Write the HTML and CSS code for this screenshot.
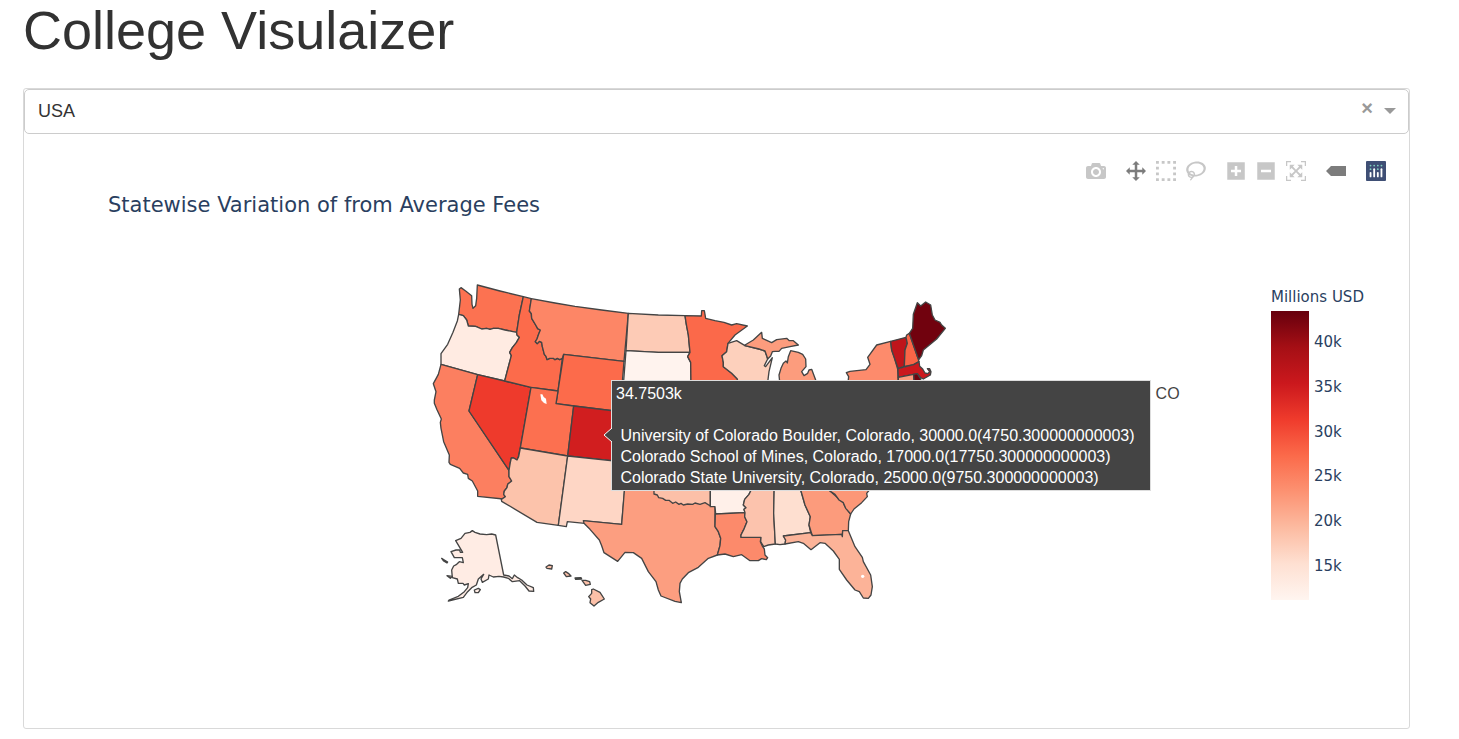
FILE: index.html
```html
<!DOCTYPE html>
<html lang="en">
<head>
<meta charset="utf-8">
<title>College Visulaizer</title>
<link rel="stylesheet" href="styles.css">
</head>
<body>
<main class="page">
  <h1 class="page-title">College Visulaizer</h1>
  <section class="card">
    <div class="dropdown">
      <select class="dropdown-select" aria-label="Country">
        <option>USA</option>
      </select>
      <button class="dropdown-clear" type="button" aria-label="Clear value">×</button>
      <span class="dropdown-arrow"></span>
    </div>
    <div class="modebar">
      <div class="modebar-group">
        <button class="tool" type="button" aria-label="Download plot as a png"><svg viewBox="0 0 1000 1000"><path transform="matrix(1 0 0 -1 0 850)" d="m500 450c-83 0-150-67-150-150 0-83 67-150 150-150 83 0 150 67 150 150 0 83-67 150-150 150z m400 150h-120c-16 0-34 13-39 29l-31 93c-6 15-23 28-40 28h-340c-16 0-34-13-39-28l-31-94c-6-15-23-28-40-28h-120c-55 0-100-45-100-100v-450c0-55 45-100 100-100h800c55 0 100 45 100 100v450c0 55-45 100-100 100z m-400-550c-138 0-250 112-250 250 0 138 112 250 250 250 138 0 250-112 250-250 0-138-112-250-250-250z m365 380c-19 0-35 16-35 35 0 19 16 35 35 35 19 0 35-16 35-35 0-19-16-35-35-35z"/></svg></button>
      </div>
      <div class="modebar-group">
        <button class="tool tool-active" type="button" aria-label="Pan"><svg viewBox="0 0 1000 1000"><path transform="matrix(1 0 0 -1 0 850)" d="m1000 350l-187 188 0-125-250 0 0 250 125 0-188 187-187-187 125 0 0-250-250 0 0 125-188-188 186-187 0 125 252 0 0-250-125 0 187-188 188 188-125 0 0 250 250 0 0-126 187 188z"/></svg></button>
        <button class="tool" type="button" aria-label="Box Select"><svg viewBox="0 0 1000 1000"><path transform="matrix(1 0 0 -1 0 850)" d="m0 850l0-143 143 0 0 143-143 0z m286 0l0-143 143 0 0 143-143 0z m285 0l0-143 143 0 0 143-143 0z m286 0l0-143 143 0 0 143-143 0z m-857-286l0-143 143 0 0 143-143 0z m857 0l0-143 143 0 0 143-143 0z m-857-285l0-143 143 0 0 143-143 0z m857 0l0-143 143 0 0 143-143 0z m-857-286l0-143 143 0 0 143-143 0z m286 0l0-143 143 0 0 143-143 0z m285 0l0-143 143 0 0 143-143 0z m286 0l0-143 143 0 0 143-143 0z"/></svg></button>
        <button class="tool" type="button" aria-label="Lasso Select"><svg viewBox="0 0 1031 1000"><path transform="matrix(1 0 0 -1 0 850)" d="m1018 538c-36 207-290 336-568 286-277-48-473-256-436-463 10-57 36-108 76-151-13-66 11-137 68-183 34-28 75-41 114-42l-55-70 0 0c-2-1-3-2-4-3-10-14-8-34 5-45 14-11 34-8 45 4 1 1 2 3 2 5l0 0 113 140c16 11 31 24 45 40 4 3 6 7 8 11 48-3 100 0 151 9 278 48 473 255 436 462z m-624-379c-80 14-149 48-197 96 42 42 109 47 156 9 33-26 47-66 41-105z m-187-74c-19 16-33 37-39 60 50-32 109-55 174-68-42-25-95-24-135 8z m360 75c-34-7-69-9-102-8 8 62-16 128-68 170-73 59-175 54-244-5-9 20-16 40-20 61-28 159 121 317 333 354s407-60 434-217c28-159-121-318-333-355z"/></svg></button>
      </div>
      <div class="modebar-group">
        <button class="tool" type="button" aria-label="Zoom in"><svg viewBox="0 0 875 1000"><path transform="matrix(1 0 0 -1 0 850)" d="m1 787l0-875 875 0 0 875-875 0z m687-500l-187 0 0-187-125 0 0 187-188 0 0 125 188 0 0 187 125 0 0-187 187 0 0-125z"/></svg></button>
        <button class="tool" type="button" aria-label="Zoom out"><svg viewBox="0 0 875 1000"><path transform="matrix(1 0 0 -1 0 850)" d="m0 788l0-876 875 0 0 876-875 0z m688-500l-500 0 0 125 500 0 0-125z"/></svg></button>
        <button class="tool" type="button" aria-label="Reset"><svg viewBox="0 0 1000 1000"><path transform="matrix(1 0 0 -1 0 850)" d="m250 850l-187 0-63 0 0-62 0-188 63 0 0 188 187 0 0 62z m688 0l-188 0 0-62 188 0 0-188 62 0 0 188 0 62-62 0z m-875-938l0 188-63 0 0-188 0-62 63 0 187 0 0 62-187 0z m875 188l0-188-188 0 0-62 188 0 62 0 0 62 0 188-62 0z m-125 188l-1 0-93-94-156 156 156 156 92-93 2 0 0 250-250 0 0-2 93-92-156-156-156 156 94 92 0 2-250 0 0-250 0 0 93 93 157-156-157-156-93 94 0 0 0-250 250 0 0 0-94 93 156 157 156-157-93-93 0 0 250 0 0 250z"/></svg></button>
      </div>
      <div class="modebar-group">
        <button class="tool tool-active" type="button" aria-label="Toggle show closest data on hover"><svg viewBox="0 0 1500 1000"><path transform="matrix(1 0 0 -1 0 850)" d="m375 725l0 0-375-375 375-374 0-1 1125 0 0 750-1125 0z"/></svg></button>
      </div>
      <div class="modebar-group">
        <a class="tool" href="#" aria-label="Produced with Plotly"><svg viewBox="0 0 132 132"><rect width="132" height="132" rx="6" fill="#3f4f75"/><g fill="#80cfbe"><circle cx="30" cy="30" r="6"/><circle cx="54" cy="30" r="6"/><circle cx="78" cy="30" r="6"/><circle cx="102" cy="30" r="6"/><circle cx="30" cy="54" r="6"/><circle cx="78" cy="54" r="6"/></g><g fill="#fff"><rect x="24" y="72" width="12" height="36" rx="6"/><rect x="48" y="48" width="12" height="60" rx="6"/><rect x="72" y="72" width="12" height="36" rx="6"/><rect x="96" y="48" width="12" height="60" rx="6"/></g></svg></a>
      </div>
    </div>
    <h2 class="chart-title">Statewise Variation of from Average Fees</h2>
    <div class="plot">
      <div class="map-area">
        <div class="map">
          <svg class="map-svg" viewBox="-21 15 1629 996" role="img" aria-label="Average fees by state">
            <g class="states">
              <polygon fill="#fc7251" points="103,42 108,38 122,48 140,62 141,88 144,100 152,92 155,70 157,30 225,48 295,65 283,120 275,172 240,165 220,160 205,160 195,163 185,160 170,162 152,154 130,153 125,135 115,122 101,118 106,75"/>
              <polygon fill="#ffebe2" points="101,118 115,122 125,135 130,153 152,154 170,162 185,160 195,163 205,160 220,160 240,165 275,172 276,180 283,187 274,203 262,218 254,232 259,242 239,318 158,299 48,268 48,236 68,208 84,172 97,138"/>
              <polygon fill="#fc7f60" points="48,268 158,299 132,408 252,586 252,605 260,618 248,628 246,638 238,648 236,658 241,665 235,672 158,664 158,648 142,618 130,610 128,598 115,594 104,580 76,568 72,562 73,540 56,500 48,460 46,442 49,432 36,404 28,385 28,375 33,350 25,326 40,298"/>
              <polygon fill="#ee3a2c" points="158,299 239,318 318,337 286,518 280,545 276,555 266,549 259,549 256,562 252,586 132,408"/>
              <polygon fill="#fc6b4b" points="295,65 319,71 316,90 313,108 319,116 320,130 332,150 338,161 346,165 340,180 336,192 331,200 337,206 343,199 350,202 352,215 358,238 363,244 366,254 374,250 385,250 390,254 397,250 404,254 412,250 399,348 318,337 239,318 259,242 254,232 262,218 274,203 283,187 276,180 275,172 283,120"/>
              <polygon fill="#fd8666" points="319,71 390,84 450,94 530,105 610,115 597,259 416,238 412,250 404,254 397,250 390,254 385,250 374,250 366,254 363,244 358,238 352,215 350,202 343,199 337,206 331,200 336,192 340,180 346,165 338,161 332,150 320,130 319,116 313,108 316,90"/>
              <polygon fill="#fc6b4b" points="416,238 597,259 585,410 393,386"/>
              <polygon fill="#fc7050" points="318,337 399,348 393,386 446,393 428,543 286,519"/>
              <polygon fill="#d11e1f" points="446,393 620,414 608,562 428,543"/>
              <polygon fill="#fcc3ab" points="286,519 428,543 400,751 336,742 230,679 229,673 241,665 236,658 238,648 246,638 248,628 260,618 252,605 252,586 256,562 259,549 266,549 276,555 281,545"/>
              <polygon fill="#fed6c5" points="428,543 606,562 590,748 477,738 479,745 427,740 424,755 400,751"/>
              <polygon fill="#fc9e80" points="606,562 598,648 590,748 475,737 477,745 495,763 523,795 530,812 537,833 578,859 600,832 625,833 650,850 670,890 693,920 700,945 708,963 750,979 769,983 763,950 765,925 772,912 790,893 820,877 850,850 877,840 885,812 887,790 880,770 870,755 870,695 687,580"/>
              <polygon fill="#fcc0a8" points="687,600 687,657 697,660 701,668 713,670 722,676 732,676 743,685 752,681 762,688 768,685 775,690 788,687 803,688 810,684 825,688 840,683 856,693 856,600"/>
              <polygon fill="#fff0e9" points="856,620 856,695 870,695 872,717 960,713 957,703 963,698 955,690 959,673 972,658 977,648 980,620"/>
              <polygon fill="#fc8a6b" points="871,717 960,713 959,725 966,740 958,760 948,780 948,787 1008,787 1006,800 1013,815 1018,822 1020,840 1028,848 1024,854 1010,851 1000,857 975,857 950,839 925,845 900,837 877,840 885,812 887,790 880,770 870,755"/>
              <polygon fill="#fcc3ad" points="980,620 977,648 972,658 959,673 955,690 963,698 957,703 960,713 959,725 966,740 958,760 948,780 948,787 1008,787 1007,800 1016,815 1030,810 1051,807 1046,715 1048,620"/>
              <polygon fill="#fedfd0" points="1048,620 1046,715 1051,807 1065,809 1080,807 1082,795 1075,783 1157,773 1152,750 1156,725 1140,690 1128,648 1120,620"/>
              <polygon fill="#fc9b7c" points="1120,620 1128,648 1140,690 1156,725 1152,750 1162,782 1250,778 1252,785 1253,767 1270,767 1271,740 1277,717 1260,695 1255,683 1215,648 1190,620"/>
              <polygon fill="#fc9777" points="1190,620 1215,648 1230,658 1242,675 1255,683 1262,700 1277,717 1287,702 1310,683 1327,665 1325,655 1333,645 1340,620"/>
              <polygon fill="#fcb398" points="1075,783 1157,773 1162,782 1250,778 1252,785 1253,767 1270,767 1290,815 1312,847 1315,860 1337,900 1342,935 1338,960 1330,970 1315,969 1303,950 1290,945 1265,915 1243,883 1243,853 1225,828 1200,805 1185,803 1158,824 1135,805 1120,800 1080,807 1082,795"/>
              <polygon fill="#fdcbb6" points="610,115 700,120 780,122 784,148 790,180 795,232 700,232 603,227"/>
              <polygon fill="#fff3ee" points="603,227 700,232 795,232 788,245 797,262 798,330 595,330"/>
              <polygon fill="#fb694a" points="780,122 829,123 830,107 838,107 842,130 870,137 897,142 920,150 935,146 967,153 930,180 909,205 905,230 891,242 895,262 895,275 920,295 937,312 940,330 798,330 797,262 788,245 795,232 790,180 784,148"/>
              <polygon fill="#fdd0bc" points="909,205 935,197 960,212 1002,222 1020,228 1025,242 1028,252 1018,272 1022,275 1042,248 1032,290 1027,330 940,330 937,312 920,295 895,275 895,262 891,242 905,230"/>
              <polygon fill="#fc9c7d" points="960,210 985,195 1010,172 1012,190 1040,203 1055,194 1085,190 1093,197 1105,197 1120,210 1095,215 1070,220 1062,229 1050,229 1042,230 1037,243 1028,252 1025,242 1020,228 1002,222 960,212"/>
              <polygon fill="#fc9c7d" points="1097,227 1120,232 1133,238 1142,252 1143,275 1130,290 1137,302 1148,295 1152,285 1160,283 1172,315 1172,330 1065,330 1062,300 1068,280 1075,265 1083,258 1087,264 1090,245"/>
              <polygon fill="#fd8b6c" points="1264,293 1275,289 1323,284 1335,268 1328,247 1355,210 1397,199 1400,225 1407,245 1418,282 1420,330 1268,330 1271,305"/>
              <polygon fill="#bf151b" points="1397,199 1443,187 1447,205 1440,225 1438,274 1419,280 1407,245 1400,225"/>
              <polygon fill="#fa6547" points="1445,180 1453,175 1466,212 1478,247 1482,260 1466,269 1438,274 1440,225 1447,205 1443,187"/>
              <polygon fill="#71020e" points="1453,175 1463,160 1465,118 1477,83 1487,93 1502,81 1517,90 1522,120 1530,135 1545,142 1550,150 1561,160 1535,192 1495,225 1490,242 1482,253 1478,247 1466,212"/>
              <polygon fill="#cb181d" points="1419,281 1466,269 1482,260 1484,274 1493,282 1500,294 1508,296 1514,290 1507,281 1514,281 1518,290 1516,300 1495,312 1487,308 1477,296 1420,307"/>
              <polygon fill="#fd9a7b" points="1420,307 1466,298 1468,330 1420,330"/>
              <polygon fill="#71020e" points="1466,298 1477,296 1487,312 1487,330 1468,330"/>
              <polygon fill="#ffece4" points="142,767 150,772 165,777 185,779 200,777 212,780 236,900 252,903 262,911 268,900 278,908 290,915 306,930 325,938 326,949 312,948 300,933 284,917 262,920 250,910 236,906 222,904 205,906 192,900 190,912 172,922 168,912 176,898 160,912 154,930 140,938 128,950 115,967 70,978 72,975 100,964 118,950 128,938 130,926 118,930 114,925 100,925 97,912 82,908 80,885 86,873 95,868 103,860 115,863 112,848 88,848 78,830 93,825 104,825 106,832 113,832 92,797 108,790 120,775 135,772"/>
              <polygon fill="#444" points="50,850 58,855 68,861 66,864 56,858"/>
              <polygon fill="#ffece4" points="66,902 82,904 76,910"/>
              <polygon fill="#ffece4" points="148,945 160,940 166,944 160,953 150,953"/>
              <polygon fill="#fcc0a8" points="363,876 372,870 382,872 380,882 366,880"/>
              <polygon fill="#fcc0a8" points="416,894 422,890 430,895 438,903 424,905"/>
              <polygon fill="#3e8f46" points="450,909 468,908 470,912 452,913"/>
              <polygon fill="#fcc0a8" points="471,916 482,916 494,920 496,928 482,931"/>
              <polygon fill="#fcc0a8" points="500,944 505,942 525,952 538,972 520,982 507,993 495,983 497,972 491,965 500,955"/>
            </g>
            <polygon class="lake" points="346,358 352,358 356,366 363,371 365,387 357,384 349,376"/>
            <circle class="lake" cx="1313" cy="904" r="5"/>
          </svg>
          <div class="hover">
            <div class="hover-box"><svg class="hover-arrow" viewBox="0 0 9 16"><path d="M9 1 1 8 9 15Z" fill="#444"/><path d="M9 1 1 8 9 15" fill="none" stroke="#fff"/></svg>34.7503k

 University of Colorado Boulder, Colorado, 30000.0(4750.300000000003)
 Colorado School of Mines, Colorado, 17000.0(17750.300000000003)
 Colorado State University, Colorado, 25000.0(9750.300000000003)</div>
            <span class="hover-name">CO</span>
          </div>
        </div>
      </div>
      <div class="colorbar">
        <div class="colorbar-title">Millions USD</div>
        <div class="colorbar-body">
          <div class="colorbar-fill"></div>
          <div class="colorbar-ticks"><span>40k</span><span>35k</span><span>30k</span><span>25k</span><span>20k</span><span>15k</span></div>
        </div>
      </div>
    </div>
  </section>
</main>
</body>
</html>
```
FILE: styles.css
```css
* { box-sizing: border-box; }

body {
  margin: 0;
  background: #fff;
  color: #323232;
  font-family: "Liberation Sans", Arial, sans-serif;
}

.page {
  margin: 0 49px 0 23px;
}

.page-title {
  margin: 0 0 28px;
  font-size: 54px;
  font-weight: 400;
  line-height: 60px;
}

.card {
  border: 1px solid #d9d9d9;
  border-radius: 3px;
  padding-bottom: 116px;
}

.dropdown {
  display: flex;
  align-items: center;
  height: 45px;
  padding: 0 12px 2px 0;
  border: 1px solid #ccc;
  border-radius: 5px;
}

.dropdown-select {
  flex: 1;
  height: 100%;
  padding: 0 13px;
  border: 0;
  appearance: none;
  background: transparent;
  color: #333;
  font: 18px "Liberation Sans", Arial, sans-serif;
}

.dropdown-clear {
  width: 20px;
  height: 24px;
  margin: 0 7px 6px 0;
  padding: 0;
  border: 0;
  background: none;
  color: #999;
  font: 700 20px/24px "Liberation Sans", Arial, sans-serif;
}

.dropdown-arrow {
  border: 6px solid transparent;
  border-top-color: #999;
  border-bottom: 0;
}

.modebar {
  display: flex;
  justify-content: flex-end;
  gap: 10px;
  padding: 27px 18px 0 0;
}

.modebar-group { display: flex; }

.tool {
  display: block;
  width: 30px;
  height: 20px;
  padding: 0 5px;
  border: 0;
  background: none;
  fill: #c7c7c7;
}

.tool-active { fill: #7c7c7c; }

.tool svg {
  display: block;
  width: 20px;
  height: 20px;
}

.chart-title {
  margin: 10px 0 0 84px;
  color: #2a3f5f;
  font: 400 21px/28px "DejaVu Sans", Verdana, sans-serif;
}

.plot {
  display: flex;
  padding: 61px 44px 0 84px;
}

.map-area {
  display: flex;
  flex: 1;
  justify-content: center;
}

.map {
  position: relative;
  width: 543px;
}

.map-svg {
  display: block;
  width: 100%;
}

.states {
  stroke: #444;
  stroke-width: 4;
  stroke-linejoin: round;
}

.lake { fill: #fff; }

.hover {
  position: absolute;
  top: 100px;
  left: 193px;
  display: flex;
  gap: 5px;
  font-size: 16px;
  line-height: 21px;
  white-space: pre;
}

.hover-box {
  position: relative;
  padding: 2px 15px 2px 4px;
  border: 1px solid #ddd;
  background: #444;
  color: #fff;
}

.hover-arrow {
  position: absolute;
  top: 46px;
  left: -9px;
  width: 9px;
  height: 16px;
}

.hover-name {
  padding-top: 3px;
  color: #444;
}

.colorbar {
  width: 94px;
  padding-top: 7px;
  color: #2a3f5f;
  font: 15px/20px "DejaVu Sans", Verdana, sans-serif;
  white-space: nowrap;
}

.colorbar-body {
  display: flex;
  gap: 5px;
  height: 289px;
  margin-top: 4px;
}

.colorbar-fill {
  width: 38px;
  background: linear-gradient(to top, #fff5f0, #fee0d2 12.5%, #fcbba1 25%, #fc9272 37.5%, #fb6a4a 50%, #ef3b2c 62.5%, #cb181d 75%, #a50f15 87.5%, #67000d);
}

.colorbar-ticks {
  display: flex;
  flex-direction: column;
  justify-content: space-between;
  padding: 21px 0 24px;
}
```
